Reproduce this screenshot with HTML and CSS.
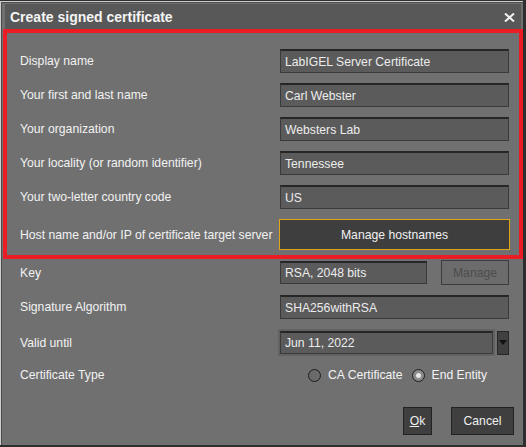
FILE: index.html
```html
<!DOCTYPE html>
<html>
<head>
<meta charset="utf-8">
<link rel="stylesheet" href="styles.css">
</head>
<body>
<div class="window">
  <div class="titlebar">
    <span class="title">Create signed certificate</span>
    <svg class="close" width="11" height="9" viewBox="0 0 11 9"><path d="M1 0.5 L10 8.5 M10 0.5 L1 8.5" stroke="#f2f2f2" stroke-width="2"/></svg>
  </div>
  <div class="form">
    <div class="row"><span class="label">Display name</span><div class="field">LabIGEL Server Certificate</div></div>
    <div class="row"><span class="label">Your first and last name</span><div class="field">Carl Webster</div></div>
    <div class="row"><span class="label">Your organization</span><div class="field">Websters Lab</div></div>
    <div class="row"><span class="label">Your locality (or random identifier)</span><div class="field">Tennessee</div></div>
    <div class="row"><span class="label">Your two-letter country code</span><div class="field">US</div></div>
    <div class="row row-btn"><span class="label">Host name and/or IP of certificate target server</span><div class="btn btn-focus">Manage hostnames</div></div>
    <div class="row row-key"><span class="label">Key</span>
      <div class="pair"><div class="field field-key">RSA, 2048 bits</div><div class="btn btn-disabled">Manage</div></div>
    </div>
    <div class="row"><span class="label">Signature Algorithm</span><div class="field">SHA256withRSA</div></div>
    <div class="row row-date"><span class="label">Valid until</span>
      <div class="pair pair-date">
        <div class="datewrap"><div class="field field-date">Jun 11, 2022</div></div>
        <div class="dropbtn"><svg width="8" height="5" viewBox="0 0 8 5"><path d="M0 0 H8 L4 5 Z" fill="#111"/></svg></div>
      </div>
    </div>
    <div class="row row-radio"><span class="label">Certificate Type</span>
      <div class="radios">
        <span class="radio"></span><span class="rlabel">CA Certificate</span>
        <span class="radio radio-on"><span class="dot"></span></span><span class="rlabel">End Entity</span>
      </div>
    </div>
    <div class="actions">
      <div class="btn btn-ok"><u>O</u>k</div>
      <div class="btn btn-cancel">Cancel</div>
    </div>
  </div>
</div>
<div class="highlight"></div>
</body>
</html>
```
FILE: styles.css
```css
html, body {
  margin: 0;
  padding: 0;
}
body {
  background: #2e2e2e;
  width: 526px;
  height: 447px;
  overflow: hidden;
  font-family: "Liberation Sans", Arial, sans-serif;
  font-size: 12.2px;
  color: #f0f0f0;
}
.window {
  margin-top: 1px;
  width: 522px;
  height: 443px;
  background: #707070;
  border-top: 1px solid #cfcfcf;
  border-left: 1px solid #cfcfcf;
  box-shadow: inset 1px 1px 0 #4c4c4c;
  display: flex;
  flex-direction: column;
}
.titlebar {
  margin: 2px 2px 0 4px;
  height: 25px;
  background: #585858;
  display: flex;
  align-items: center;
  justify-content: space-between;
  padding: 0 6px 0 5px;
}
.title {
  font-weight: bold;
  font-size: 14px;
  color: #f4f4f4;
}
.close {
  display: block;
  margin-top: 1px;
}
.form {
  padding: 20px 0 0 19px;
  display: flex;
  flex-direction: column;
  gap: 10px;
}
.row {
  display: flex;
  align-items: center;
  height: 24px;
}
.label {
  width: 260px;
  flex: none;
  white-space: nowrap;
  color: #f2f2f2;
}
.field {
  box-sizing: border-box;
  width: 229px;
  height: 24px;
  background: #5b5b5b;
  border: 1px solid #3a3a3a;
  border-top: 2px solid #262626;
  padding: 0 4px;
  display: flex;
  align-items: center;
  color: #ececec;
  white-space: nowrap;
}
.row-btn {
  height: 31px;
}
.btn {
  box-sizing: border-box;
  display: flex;
  align-items: center;
  justify-content: center;
  background: #3f3f3f;
  border: 1px solid #222;
  color: #f0f0f0;
}
.btn.btn-focus {
  width: 231px;
  height: 31px;
  margin-left: -1px;
  border: 1px solid #e0a418;
  background: #3e3e3e;
}
.row-key {
  height: 25px;
}
.pair {
  display: flex;
  align-items: center;
}
.field-key {
  width: 147px;
  height: 23px;
}
.btn.btn-disabled {
  margin-left: 14px;
  width: 68px;
  height: 25px;
  background: #6c6c6c;
  border-color: #3c3c3c;
  color: #4c4c4c;
}
.row-date {
  height: 27px;
}
.pair-date {
  margin-left: -2px;
}
.datewrap {
  box-sizing: border-box;
  width: 217px;
  height: 27px;
  padding: 2px;
  background: #626262;
}
.field-date {
  width: 213px;
  height: 23px;
}
.dropbtn {
  box-sizing: border-box;
  margin-left: 2px;
  width: 12px;
  height: 24px;
  background: #404040;
  border: 1px solid #262626;
  display: flex;
  align-items: center;
  justify-content: center;
}
.row-radio {
  height: 18px;
}
.radios {
  display: flex;
  align-items: center;
  padding-left: 28px;
}
.radio {
  box-sizing: border-box;
  width: 13px;
  height: 13px;
  border-radius: 50%;
  border: 1px solid #1c1c1c;
  background: #6a6a6a;
  display: flex;
  align-items: center;
  justify-content: center;
}
.radio-on {
  background: #8a8a8a;
}
.dot {
  width: 5px;
  height: 5px;
  border-radius: 50%;
  background: #e8e8e8;
}
.rlabel {
  margin-left: 7px;
  margin-right: 9px;
  color: #f2f2f2;
}
.actions {
  margin-top: 13px;
  display: flex;
  justify-content: flex-end;
  gap: 19px;
  padding-right: 9px;
}
.btn-ok {
  width: 29px;
  height: 28px;
}
.btn-cancel {
  width: 63px;
  height: 28px;
}
.highlight {
  position: absolute;
  left: 3px;
  top: 29px;
  width: 520px;
  height: 230px;
  box-sizing: border-box;
  border: 4px solid #ec1c24;
}
```
